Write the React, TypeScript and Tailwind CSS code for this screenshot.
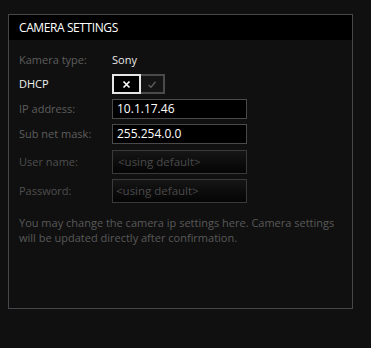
import React from "react";

const font = { fontFamily: '"Open Sans", "Noto Sans", sans-serif' };

function Row({ label, labelClass, children, h }: { label: string; labelClass: string; children: React.ReactNode; h: string }) {
  return (
    <div className={`flex items-center ${h}`}>
      <div className={`w-[93px] shrink-0 text-[11px] ${labelClass}`}>{label}</div>
      {children}
    </div>
  );
}

export default function App() {
  return (
    <div className="h-[348px] w-[371px] bg-[#101010] pl-[8px] pt-[14px]" style={font}>
      <div className="flex h-[295px] w-[345px] flex-col border border-[#45474a]">
        <div className="flex h-[25px] items-center bg-black pl-[10px] text-[12px] tracking-[-0.4px] text-white">CAMERA SETTINGS</div>
        <div className="flex flex-col pl-[10px] pt-[10px]">
          <Row label="Kamera type:" labelClass="text-[#5e5e5e]" h="h-[20px]">
            <span className="text-[11px] text-[#e8e8e8]">Sony</span>
          </Row>
          <div className="mt-[4px]">
            <Row label="DHCP" labelClass="text-[#f0f0f0] text-[11.5px]" h="h-[20px]">
              <div className="flex h-[20px]">
                <div className="flex w-[29px] items-center justify-center border-2 border-[#e6e6e6] bg-black">
                  <svg width="9" height="9" viewBox="0 0 9 9">
                    <path d="M1.5 1.5 L7.5 7.5 M7.5 1.5 L1.5 7.5" stroke="#ffffff" strokeWidth="1.6" />
                  </svg>
                </div>
                <div className="flex w-[24px] items-center justify-center border-2 border-l-0 border-[#4a4a4a] bg-[#141414]">
                  <svg width="10" height="9" viewBox="0 0 10 9">
                    <path d="M1.5 5 L4 7.2 L8.5 1.8" stroke="#5a5a5a" strokeWidth="1.4" fill="none" />
                  </svg>
                </div>
              </div>
            </Row>
          </div>
          <div className="mt-[5px]">
            <Row label="IP address:" labelClass="text-[#5e5e5e]" h="h-[20px]">
              <div className="flex h-[20px] w-[135px] items-center border border-[#4a4a4a] bg-black pl-[4px] text-[12px] text-white">10.1.17.46</div>
            </Row>
          </div>
          <div className="mt-[5px]">
            <Row label="Sub net mask:" labelClass="text-[#5e5e5e]" h="h-[20px]">
              <div className="flex h-[20px] w-[135px] items-center border border-[#4a4a4a] bg-black pl-[4px] text-[12px] text-white">255.254.0.0</div>
            </Row>
          </div>
          <div className="mt-[6px]">
            <Row label="User name:" labelClass="text-[#4f4f4f]" h="h-[24px]">
              <div className="flex h-[24px] w-[135px] items-center border border-[#3a3a3a] bg-gradient-to-b from-[#161616] to-[#050505] pl-[5px] text-[11.5px] text-[#4a4a4a]">&lt;using default&gt;</div>
            </Row>
          </div>
          <div className="mt-[5px]">
            <Row label="Password:" labelClass="text-[#4f4f4f]" h="h-[24px]">
              <div className="flex h-[24px] w-[135px] items-center border border-[#3a3a3a] bg-gradient-to-b from-[#161616] to-[#050505] pl-[3px] text-[11.5px] text-[#4a4a4a]">&lt;using default&gt;</div>
            </Row>
          </div>
          <p className="mt-[12px] w-[330px] text-[11px] leading-[15px] text-[#595959]">
            You may change the camera ip settings here. Camera settings will be updated directly after confirmation.
          </p>
        </div>
      </div>
    </div>
  );
}
